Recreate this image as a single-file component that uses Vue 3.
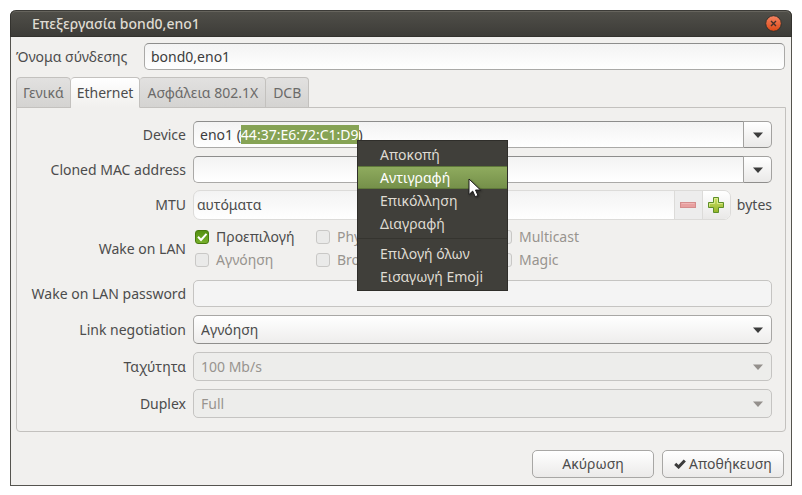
<script setup>
import { onMounted, ref } from 'vue'

const name = ref('bond0,eno1')
const device = ref('eno1 (44:37:E6:72:C1:D9)')
const clonedMac = ref('')
const mtu = ref('αυτόματα')
const deviceInput = ref(null)

const tabs = ['Γενικά', 'Ethernet', 'Ασφάλεια 802.1X', 'DCB']
const activeTab = ref('Ethernet')

const wakeOptions = ref([
  { label: 'Προεπιλογή', checked: true, disabled: false },
  { label: 'Phy', checked: false, disabled: true },
  { label: 'Multicast', checked: false, disabled: true },
  { label: 'Αγνόηση', checked: false, disabled: true },
  { label: 'Broadcast', checked: false, disabled: true },
  { label: 'Magic', checked: false, disabled: true },
])

const menuGroups = [
  ['Αποκοπή', 'Αντιγραφή', 'Επικόλληση', 'Διαγραφή'],
  ['Επιλογή όλων', 'Εισαγωγή Emoji'],
]

const selects = [
  { id: 'link', label: 'Link negotiation', value: 'Αγνόηση', disabled: false },
  { id: 'speed', label: 'Ταχύτητα', value: '100 Mb/s', disabled: true },
  { id: 'duplex', label: 'Duplex', value: 'Full', disabled: true },
]

onMounted(() => {
  deviceInput.value.focus()
  deviceInput.value.setSelectionRange(6, 23)
})
</script>

<template>
  <main class="dialog">
    <header class="titlebar">
      <h1>Επεξεργασία bond0,eno1</h1>
      <button class="close" type="button" aria-label="Κλείσιμο">
        <svg viewBox="0 0 17 17" width="17" height="17">
          <defs>
            <linearGradient id="closeFill" x1="0" y1="0" x2="0" y2="1">
              <stop offset="0" stop-color="#f58463" />
              <stop offset="1" stop-color="#dd4814" />
            </linearGradient>
          </defs>
          <circle cx="8.5" cy="8.5" r="7.8" fill="url(#closeFill)" stroke="#33322d" />
          <path d="M6 6l5 5M11 6l-5 5" stroke="#45302a" stroke-width="1.4" />
        </svg>
      </button>
    </header>

    <form class="body" @submit.prevent>
      <div class="name-row">
        <label for="name">Όνομα σύνδεσης</label>
        <input id="name" v-model="name" class="entry" type="text" />
      </div>

      <div class="tabs" role="tablist">
        <button
          v-for="tab in tabs"
          :key="tab"
          type="button"
          role="tab"
          class="tab"
          :class="{ active: tab === activeTab }"
          :aria-selected="tab === activeTab"
          @click="activeTab = tab"
        >{{ tab }}</button>
      </div>

      <section class="panel" role="tabpanel">
        <div class="row">
          <label for="device">Device</label>
          <div class="combo">
            <input id="device" ref="deviceInput" v-model="device" class="entry" type="text" />
            <button type="button" class="drop" aria-label="Device">
              <svg class="arrow" viewBox="0 0 10 6" width="10" height="6"><path d="M0 0.5h10L5 6z" /></svg>
            </button>
          </div>
        </div>

        <div class="row">
          <label for="mac">Cloned MAC address</label>
          <div class="combo">
            <input id="mac" v-model="clonedMac" class="entry" type="text" />
            <button type="button" class="drop" aria-label="Cloned MAC address">
              <svg class="arrow" viewBox="0 0 10 6" width="10" height="6"><path d="M0 0.5h10L5 6z" /></svg>
            </button>
          </div>
        </div>

        <div class="row mtu-row">
          <label for="mtu">MTU</label>
          <div class="mtu">
            <div class="spin">
              <input id="mtu" v-model="mtu" type="text" />
              <button type="button" class="minus" disabled aria-label="−">
                <svg viewBox="0 0 16 6" width="16" height="6">
                  <rect x="0.5" y="0.5" width="15" height="5" fill="#e8a0a0" stroke="#d48d8d" />
                  <path d="M1.500 1.500h13" stroke="#efb6b6" />
                </svg>
              </button>
              <button type="button" class="plus" aria-label="+">
                <svg viewBox="0 0 16 16" width="16" height="16">
                  <defs>
                    <linearGradient id="plusFill" x1="0" y1="0" x2="0" y2="1">
                      <stop offset="0" stop-color="#cfe26a" />
                      <stop offset="1" stop-color="#94b428" />
                    </linearGradient>
                  </defs>
                  <path d="M5.500 0.500h5v5h5v5h-5v5h-5v-5h-5v-5h5z" fill="url(#plusFill)" stroke="#5d8f27" />
                  <path d="M6.500 6.500v-5h3v5h5M1.500 9.500v-3h5" fill="none" stroke="#e2ef9b" stroke-opacity=".8" />
                </svg>
              </button>
            </div>
            <span>bytes</span>
          </div>
        </div>

        <div class="row wake" role="group" aria-labelledby="wake-caption">
          <span id="wake-caption" class="caption">Wake on LAN</span>
          <div class="checks">
            <label v-for="opt in wakeOptions" :key="opt.label" class="check" :class="{ off: opt.disabled }">
              <span class="box">
                <input v-model="opt.checked" type="checkbox" :disabled="opt.disabled" />
                <svg v-if="opt.checked" viewBox="0 0 14 14" width="14" height="14">
                  <path d="M3 6.800l3 3.200 5.500-6.200" fill="none" stroke="#fff" stroke-width="2" />
                </svg>
              </span>
              <span>{{ opt.label }}</span>
            </label>
          </div>
        </div>

        <div class="row">
          <label for="password">Wake on LAN password</label>
          <input id="password" class="entry" type="text" disabled />
        </div>

        <div v-for="s in selects" :key="s.id" class="row">
          <label :for="s.id">{{ s.label }}</label>
          <div class="select">
            <select :id="s.id" :disabled="s.disabled">
              <option>{{ s.value }}</option>
            </select>
            <svg class="arrow" :class="{ dim: s.disabled }" viewBox="0 0 10 6" width="10" height="6">
              <path d="M0 0.5h10L5 6z" />
            </svg>
          </div>
        </div>
      </section>

      <footer class="actions">
        <button type="button" class="action">Ακύρωση</button>
        <button type="submit" class="action">
          <svg viewBox="0 0 12 10" width="12" height="10">
            <path d="M1.200 4.800L4.600 8L10.800 1.500" fill="none" stroke="#3c3c3c" stroke-width="3" />
          </svg>
          Αποθήκευση
        </button>
      </footer>
    </form>

    <div class="menu" role="menu">
      <div v-for="(group, g) in menuGroups" :key="g" class="group">
        <button
          v-for="item in group"
          :key="item"
          type="button"
          role="menuitem"
          :class="{ hot: item === 'Αντιγραφή' }"
        >{{ item }}</button>
      </div>
    </div>

    <svg class="pointer" viewBox="0 0 14 20" width="14" height="20">
      <path d="M1 1v15.500l3.700-3.400 2.500 5.600 2.800-1.200-2.500-5.500h5z" fill="#fff" stroke="#1c1c1c" />
    </svg>
  </main>
</template>

<style>
body {
  background: #fff;
}
</style>

<style scoped>
.dialog {
  position: relative;
  box-sizing: border-box;
  margin: 10px;
  border: 1px solid #55544f;
  border-top: 0;
  border-radius: 6px 6px 0 0;
  background: #f1f0ee;
  color: #4c4c4c;
  font: 14px/20px 'Noto Sans', 'Open Sans', sans-serif;
}
.dialog *,
.dialog *::before {
  box-sizing: border-box;
}
button,
input,
select {
  margin: 0;
  padding: 0;
  border: 0;
  background: none;
  color: inherit;
  font: inherit;
  outline: none;
}
svg {
  display: block;
}
label,
.caption {
  white-space: nowrap;
}
.titlebar {
  display: flex;
  align-items: center;
  justify-content: space-between;
  height: 27px;
  margin: 0 -1px;
  padding: 0 9px 0 21px;
  border: 1px solid #33322e;
  border-top-color: #3c3b37;
  border-radius: 6px 6px 0 0;
  background: linear-gradient(#504f49, #3d3c38);
  box-shadow: inset 0 1px #66645d;
}
h1 {
  margin: 0;
  color: #dfdbd2;
  font-size: 14px;
  font-weight: 500;
}
.body {
  padding: 6px 5px 7px 5px;
}
.name-row {
  display: grid;
  grid-template-columns: 116px 1fr;
  gap: 12px;
  align-items: center;
  padding-right: 1px;
}
.entry {
  width: 100%;
  min-width: 0;
  height: 27px;
  padding: 0 6px;
  border: 1px solid #aaa9a7;
  border-top-color: #8d8d8c;
  border-radius: 5px;
  background: linear-gradient(#f3f3f3, #fff);
  color: #3c3c3c;
}
.entry:disabled {
  border-color: #c5c4c2;
  background: #f4f4f4;
}
.entry::selection {
  background: #86a355;
  color: #fff;
}
.tabs {
  position: relative;
  z-index: 1;
  display: flex;
  margin-top: 7px;
}
.tab {
  height: 31px;
  padding: 0 6px;
  border: 1px solid #c3c1be;
  border-left-width: 0;
  border-radius: 4px 4px 0 0;
  background: linear-gradient(#e2e1e0, #d4d3d1);
  color: #6b6a69;
  white-space: nowrap;
}
.tab:first-child {
  border-left-width: 1px;
}
.tab:nth-child(n + 3) {
  padding: 0 7px;
}
.tab.active {
  border-bottom-color: #f1f0ee;
  background: linear-gradient(#fff, #f1f0ee);
  color: #4c4c4c;
}
.panel {
  display: flex;
  flex-direction: column;
  gap: 8px;
  margin-top: -1px;
  padding: 13px 13px 13px 6px;
  border: 1px solid #c3c1be;
  border-radius: 0 0 4px 4px;
}
.row {
  display: grid;
  grid-template-columns: 163px 1fr;
  gap: 7px;
  align-items: center;
}
.row > label,
.caption {
  justify-self: end;
}
.combo {
  display: flex;
  min-width: 0;
}
.combo .entry {
  flex: 1;
  border-right: 0;
  border-radius: 5px 0 0 5px;
}
.drop {
  display: grid;
  place-items: center;
  width: 29px;
  height: 27px;
  border: 1px solid #a3a2a0;
  border-bottom-color: #8f8e8c;
  border-radius: 0 5px 5px 0;
  background: linear-gradient(#fff, #eae9e8);
}
.arrow {
  fill: #3c3c3c;
}
.arrow.dim {
  fill: #94908c;
}
.mtu-row {
  margin: -1px 0;
}
.mtu {
  display: flex;
  align-items: center;
  gap: 6px;
}
.spin {
  display: flex;
  flex: 1;
  height: 30px;
  border: 1px solid #dcdbd9;
  border-radius: 7px;
  background: linear-gradient(#f3f3f3, #fff);
  overflow: hidden;
}
.spin input {
  flex: 1;
  min-width: 0;
  padding: 0 3px;
}
.spin button {
  display: grid;
  place-items: center;
  width: 28px;
  border-left: 1px solid #dcdbd9;
}
.minus {
  background: #ededed;
}
.plus {
  background: linear-gradient(#fff, #e9e8e7);
}
.wake {
  margin-top: -2px;
}
.checks {
  display: grid;
  grid-template-columns: 121px 182px 1fr;
  grid-auto-rows: 23px;
  padding: 0 0 1px 2px;
}
.check {
  display: flex;
  align-items: center;
  gap: 7px;
}
.check.off {
  color: #98948f;
}
.box {
  display: grid;
  width: 14px;
  height: 14px;
}
.box > * {
  grid-area: 1 / 1;
}
.box input {
  width: 14px;
  height: 14px;
  border: 1px solid #c9c8c6;
  border-radius: 3px;
  background: #eaeae9;
  appearance: none;
}
.box input:checked {
  border-color: #477a0c;
  background: linear-gradient(#559012, #77b02b);
}
.box svg {
  z-index: 1;
  pointer-events: none;
}
.select {
  display: grid;
  align-items: center;
}
.select > * {
  grid-area: 1 / 1;
}
.select .arrow {
  justify-self: end;
  margin-right: 9px;
  pointer-events: none;
}
select {
  width: 100%;
  height: 29px;
  padding: 0 7px;
  border: 1px solid #a8a7a5;
  border-bottom-color: #8f8e8c;
  border-radius: 5px;
  background: linear-gradient(#fff, #eeedec);
  appearance: none;
}
select:disabled {
  border-color: #c5c4c2;
  background: #ededeb;
  color: #98948f;
  opacity: 1;
}
.actions {
  display: flex;
  justify-content: flex-end;
  gap: 8px;
  margin-top: 18px;
  padding-right: 2px;
}
.action {
  display: flex;
  align-items: center;
  justify-content: center;
  gap: 3px;
  width: 122px;
  height: 28px;
  border: 1px solid #a8a7a5;
  border-radius: 5px;
  background: linear-gradient(#fff, #ebeae9);
  white-space: nowrap;
}
.menu {
  position: absolute;
  z-index: 2;
  top: 130px;
  left: 346px;
  width: 151px;
  padding: 2px 0;
  border: 1px solid #2f2e2a;
  background: #403f3a;
}
.group + .group {
  margin-top: 3px;
  padding-top: 3px;
  border-top: 1px solid #35342f;
}
.menu button {
  display: block;
  width: 100%;
  height: 23px;
  padding: 0 22px;
  color: #dfdbd2;
  line-height: 23px;
  text-align: left;
  white-space: nowrap;
}
.menu .hot {
  background: linear-gradient(#90ac5f, #748f49);
  box-shadow: inset 0 1px #5f783a, inset 0 -1px #5f783a;
  color: #fff;
}
.pointer {
  position: absolute;
  z-index: 3;
  top: 168px;
  left: 457px;
  filter: drop-shadow(1px 1px 1px rgba(0, 0, 0, 0.4));
}
</style>
